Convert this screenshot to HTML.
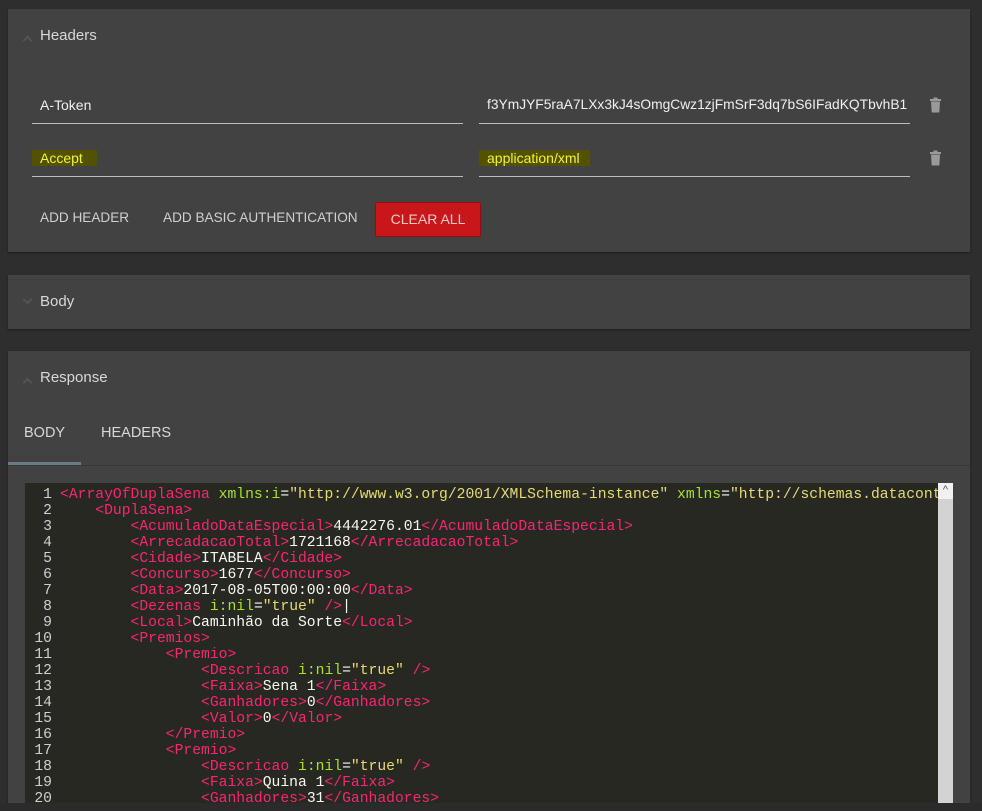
<!DOCTYPE html>
<html><head><meta charset="utf-8"><style>
*{margin:0;padding:0;box-sizing:border-box}
body{width:982px;height:811px;background:#2e2e2e;font-family:"Liberation Sans",sans-serif;position:relative;overflow:hidden}
.panel{position:absolute;left:8px;width:962px;background:#424242;box-shadow:0 1px 2px rgba(0,0,0,.4)}
.title{position:absolute;left:32px;font-size:15px;color:#d8d8d8}
.chev{position:absolute;left:16px;width:7px;height:7px;border-left:2px solid #545454;border-top:2px solid #545454}
.field{position:absolute;border-bottom:1px solid #bdbdbd;height:1px}
.t{position:absolute;font-size:14px;color:#f0f0f0}
.hl{background:#525200;color:#f2f23a;padding:0 6px 0 8px}
.btn{position:absolute;font-size:13.6px;color:#d0d0d0;top:210px}
.trash{position:absolute;left:921px;width:13px}
.code{position:absolute;left:25px;top:483px;width:928px;height:328px;background:#272822;overflow:hidden;font-family:"Liberation Mono",monospace;font-size:14.7px;line-height:16px;color:#f8f8f2;white-space:pre}
.ln{position:absolute;left:0;width:27px;text-align:right;color:#d0d0d0;top:4px}
.src{position:absolute;left:35px;top:4px}
.g{color:#f92672}.a{color:#a6e22e}.s{color:#e6db74}
</style></head><body>
<div class="panel" style="top:9px;height:243px">
<div class="chev" style="top:28px;transform:rotate(45deg)"></div>
<div class="title" style="top:18px">Headers</div>
<div class="t" style="left:32px;top:88px">A-Token</div>
<div class="field" style="left:24px;top:114px;width:431px"></div>
<div class="t" style="left:479px;top:88px;font-size:13.8px">f3YmJYF5raA7LXx3kJ4sOmgCwz1zjFmSrF3dq7bS6IFadKQTbvhB1</div>
<div class="field" style="left:471px;top:114px;width:431px"></div>
<div class="t hl" style="left:24px;top:141px">Accept&nbsp;&nbsp;</div>
<div class="field" style="left:24px;top:167px;width:431px"></div>
<div class="t hl" style="left:471px;top:141px">application/xml&nbsp;</div>
<div class="field" style="left:471px;top:167px;width:431px"></div>
<svg class="trash" style="top:88px" viewBox="0 0 13 16" height="16"><rect x="1" y="2" width="11" height="2" fill="#9a9a9a"/><rect x="4.5" y="0.5" width="4" height="2" fill="#9a9a9a"/><path d="M2 4.5h9l-.7 11H2.7z" fill="#9a9a9a"/></svg>
<svg class="trash" style="top:141px" viewBox="0 0 13 16" height="16"><rect x="1" y="2" width="11" height="2" fill="#9a9a9a"/><rect x="4.5" y="0.5" width="4" height="2" fill="#9a9a9a"/><path d="M2 4.5h9l-.7 11H2.7z" fill="#9a9a9a"/></svg>
<div class="btn" style="left:32px;top:201px">ADD HEADER</div>
<div class="btn" style="left:155px;top:201px">ADD BASIC AUTHENTICATION</div>
<div style="position:absolute;left:367px;top:193px;width:106px;height:35px;background:#c8161a;border:1px solid #8e1012;border-radius:2px;color:#f0c8c8;font-size:14px;text-align:center;line-height:33px">CLEAR ALL</div>
</div>
<div class="panel" style="top:275px;height:54px">
<div class="chev" style="top:21px;transform:rotate(225deg)"></div>
<div class="title" style="top:18px">Body</div>
</div>
<div class="panel" style="top:351px;height:460px">
<div class="chev" style="top:28px;transform:rotate(45deg)"></div>
<div class="title" style="top:18px">Response</div>
<div style="position:absolute;left:16px;top:74px;font-size:14.5px;color:#d8d8d8">BODY</div>
<div style="position:absolute;left:93px;top:74px;font-size:14.5px;color:#d8d8d8">HEADERS</div>
<div style="position:absolute;left:0;top:111px;width:73px;height:3px;background:#687d88"></div>
<div style="position:absolute;left:0;top:114px;width:962px;height:1px;background:#383838"></div>
</div>
<div class="code">
<div class="ln">1
2
3
4
5
6
7
8
9
10
11
12
13
14
15
16
17
18
19
20</div>
<div class="src"><span class="g">&lt;ArrayOfDuplaSena</span> <span class="a">xmlns:i</span>=<span class="s">"http://www.w3.org/2001/XMLSchema-instance"</span> <span class="a">xmlns</span>=<span class="s">"http://schemas.datacontract.org/2004/07/</span>
    <span class="g">&lt;DuplaSena&gt;</span>
        <span class="g">&lt;AcumuladoDataEspecial&gt;</span>4442276.01<span class="g">&lt;/AcumuladoDataEspecial&gt;</span>
        <span class="g">&lt;ArrecadacaoTotal&gt;</span>1721168<span class="g">&lt;/ArrecadacaoTotal&gt;</span>
        <span class="g">&lt;Cidade&gt;</span>ITABELA<span class="g">&lt;/Cidade&gt;</span>
        <span class="g">&lt;Concurso&gt;</span>1677<span class="g">&lt;/Concurso&gt;</span>
        <span class="g">&lt;Data&gt;</span>2017-08-05T00:00:00<span class="g">&lt;/Data&gt;</span>
        <span class="g">&lt;Dezenas</span> <span class="a">i:nil</span>=<span class="s">"true"</span> <span class="g">/&gt;</span>|
        <span class="g">&lt;Local&gt;</span>Caminhão da Sorte<span class="g">&lt;/Local&gt;</span>
        <span class="g">&lt;Premios&gt;</span>
            <span class="g">&lt;Premio&gt;</span>
                <span class="g">&lt;Descricao</span> <span class="a">i:nil</span>=<span class="s">"true"</span> <span class="g">/&gt;</span>
                <span class="g">&lt;Faixa&gt;</span>Sena 1<span class="g">&lt;/Faixa&gt;</span>
                <span class="g">&lt;Ganhadores&gt;</span>0<span class="g">&lt;/Ganhadores&gt;</span>
                <span class="g">&lt;Valor&gt;</span>0<span class="g">&lt;/Valor&gt;</span>
            <span class="g">&lt;/Premio&gt;</span>
            <span class="g">&lt;Premio&gt;</span>
                <span class="g">&lt;Descricao</span> <span class="a">i:nil</span>=<span class="s">"true"</span> <span class="g">/&gt;</span>
                <span class="g">&lt;Faixa&gt;</span>Quina 1<span class="g">&lt;/Faixa&gt;</span>
                <span class="g">&lt;Ganhadores&gt;</span>31<span class="g">&lt;/Ganhadores&gt;</span></div>
<div style="position:absolute;left:913px;top:0;width:15px;height:320px;background:#d3d3d3"></div>
<div style="position:absolute;left:913px;top:0;width:15px;height:16px;background:#f1f1f1;color:#555;font-size:11px;text-align:center;line-height:14px;font-family:'Liberation Sans',sans-serif">^</div>
</div>
<div style="position:absolute;left:0;top:803px;width:982px;height:8px;background:#2b2b2b"></div>
</body></html>
